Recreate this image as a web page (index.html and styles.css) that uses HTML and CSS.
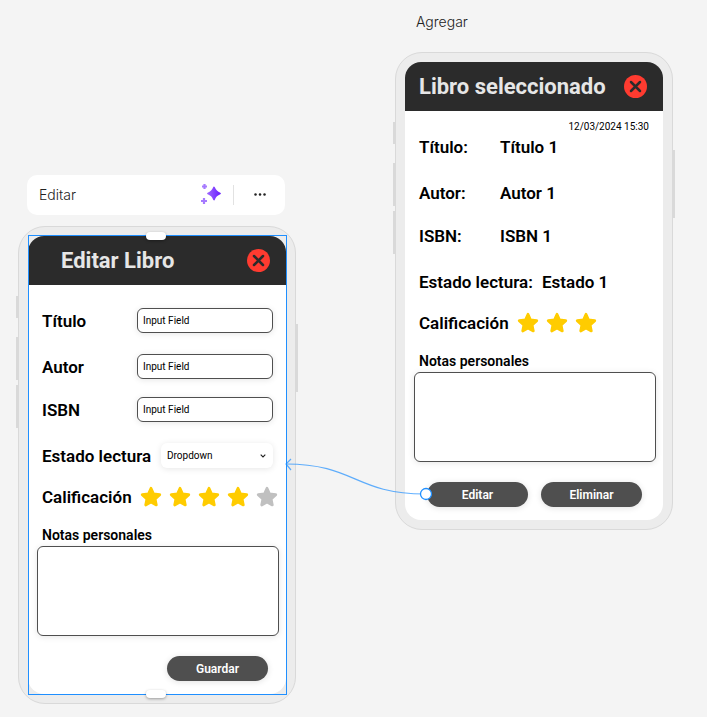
FILE: index.html
```html
<!DOCTYPE html>
<html lang="es">
<head>
<meta charset="utf-8">
<meta name="viewport" content="width=device-width, initial-scale=1">
<title>Libros</title>
<link rel="stylesheet" href="styles.css">
</head>
<body>
<svg class="defs" aria-hidden="true">
  <symbol id="star" viewBox="0 0 24 24"><path d="M12 2.500l2.700 6.100 6.900.8-5.100 4.700 1.300 6.600L12 17.600l-5.800 3.100 1.300-6.600L2.400 9.400l6.900-.8z" stroke="currentColor" stroke-width="3" stroke-linejoin="round" fill="currentColor"/></symbol>
  <symbol id="close" viewBox="0 0 24 24"><circle cx="12" cy="12" r="12" fill="#ff3b30"/><path d="M7.300 7.300l9.400 9.400M16.700 7.300l-9.400 9.400" stroke="#2b2b2b" stroke-width="2.600" stroke-linecap="round"/></symbol>
</svg>
<main class="canvas">
  <div class="toolbar">
    <span class="frame-name">Editar</span>
    <button class="tool ai" type="button" aria-label="IA">
      <svg width="22" height="22" viewBox="0 0 22 22">
        <defs><linearGradient id="violet" x1="0" x2="1"><stop offset="0" stop-color="#9b62ff"/><stop offset="1" stop-color="#6c22ff"/></linearGradient></defs>
        <path d="M14 3.500q1.600 4.400 6 6-4.400 1.600-6 6-1.600-4.400-6-6 4.400-1.600 6-6z" fill="url(#violet)" stroke="url(#violet)" stroke-width="1.800" stroke-linejoin="round"/>
        <path d="M4.500 0v5M2 2.500h5M4 14v6M1 17h6" stroke="#a67aff" stroke-width="2.200"/>
      </svg>
    </button>
    <button class="tool more" type="button" aria-label="Más">
      <svg width="14" height="4" viewBox="0 0 14 4" fill="#222"><circle cx="2.500" cy="1.500" r="1.250"/><circle cx="7" cy="1.500" r="1.250"/><circle cx="11.500" cy="1.500" r="1.250"/></svg>
    </button>
  </div>

  <section class="phone phone-edit">
    <i class="key key-a"></i><i class="key key-b"></i><i class="key key-c"></i><i class="key key-power"></i>
    <form class="screen">
      <header class="bar bar-indented">
        <h1>Editar Libro</h1>
        <button class="close" type="button" aria-label="Cerrar"><svg><use href="#close"/></svg></button>
      </header>
      <div class="content">
        <div class="row"><label for="titulo">Título</label><input id="titulo" type="text" value="Input Field"></div>
        <div class="row"><label for="autor">Autor</label><input id="autor" type="text" value="Input Field"></div>
        <div class="row"><label for="isbn">ISBN</label><input id="isbn" type="text" value="Input Field"></div>
        <div class="row"><label for="estado">Estado lectura</label>
          <span class="picker"><select id="estado"><option>Dropdown</option></select><svg width="6" height="4" viewBox="0 0 6 4"><path d="M.7.7L3 3 5.300.7" fill="none" stroke="#222" stroke-width="1.100"/></svg></span>
        </div>
        <div class="row row-rating"><span>Calificación</span>
          <span class="stars" role="img" aria-label="4 de 5"><svg><use href="#star"/></svg><svg><use href="#star"/></svg><svg><use href="#star"/></svg><svg><use href="#star"/></svg><svg class="off"><use href="#star"/></svg></span>
        </div>
        <label class="notes-label" for="notas">Notas personales</label>
        <textarea id="notas"></textarea>
        <div class="actions"><button class="pill" type="button">Guardar</button></div>
      </div>
    </form>
    <div class="selection"><i class="handle handle-top"></i><i class="handle handle-bottom"></i></div>
  </section>

  <span class="frame-name frame-name-detail">Agregar</span>
  <section class="phone phone-detail">
    <i class="key key-a"></i><i class="key key-b"></i><i class="key key-c"></i><i class="key key-power"></i>
    <div class="screen">
      <header class="bar">
        <h1>Libro seleccionado</h1>
        <button class="close" type="button" aria-label="Cerrar"><svg><use href="#close"/></svg></button>
      </header>
      <div class="content content-dated">
        <time class="date">12/03/2024 15:30</time>
        <div class="row"><span class="term">Título:</span><span>Título 1</span></div>
        <div class="row"><span class="term">Autor:</span><span>Autor 1</span></div>
        <div class="row"><span class="term">ISBN:</span><span>ISBN 1</span></div>
        <div class="row"><span class="term term-wide">Estado lectura:</span><span>Estado 1</span></div>
        <div class="row row-rating"><span>Calificación</span>
          <span class="stars" role="img" aria-label="3 estrellas"><svg><use href="#star"/></svg><svg><use href="#star"/></svg><svg><use href="#star"/></svg></span>
        </div>
        <label class="notes-label" for="notas-detalle">Notas personales</label>
        <textarea id="notas-detalle"></textarea>
        <div class="actions actions-pair"><button class="pill" type="button">Editar</button><button class="pill" type="button">Eliminar</button></div>
      </div>
    </div>
  </section>

  <svg class="link" width="150" height="46" viewBox="0 0 150 46" fill="none" stroke="#1f8fff">
    <g opacity=".7"><path d="M141 38C71 38 71 8 2 8" stroke-width="1.200"/><path d="M7 3L2 8l5 6" stroke-width="1.200"/></g>
    <circle cx="142" cy="38" r="5.500" fill="#fff" stroke-width="1.300"/>
  </svg>
</main>
</body>
</html>
```
FILE: styles.css
```css
* { box-sizing: border-box; }

body {
  margin: 0;
  background: #f4f4f4;
  color: #000;
  font-family: Roboto, "Liberation Sans", sans-serif;
}

button, input, select, textarea { font-family: inherit; margin: 0; }
svg { display: block; }
.defs { position: absolute; width: 0; height: 0; }

/* Free canvas: frames are placed by coordinates */
.canvas { position: relative; min-height: 100vh; overflow: hidden; }
.toolbar { position: absolute; left: 27px; top: 175px; }
.phone-edit { position: absolute; left: 18px; top: 226px; }
.phone-detail { position: absolute; left: 395px; top: 52px; }
.frame-name-detail { position: absolute; left: 416px; top: 12px; }
.link { position: absolute; left: 284px; top: 456px; }

.frame-name {
  font-family: Inter, sans-serif;
  font-weight: 300;
  font-size: 14px;
  line-height: 20px;
  color: #222;
}

.toolbar {
  display: flex;
  align-items: center;
  width: 258px;
  height: 40px;
  padding-left: 12px;
  border-radius: 10px;
  background: #fff;
}
.tool {
  display: flex;
  align-items: center;
  justify-content: center;
  height: 20px;
  padding: 0;
  border: 0;
  background: none;
}
.ai { width: 44px; margin-left: auto; }
.more { width: 52px; border-left: 1px solid #e2e2e2; }

/* Device frame */
.phone {
  width: 278px;
  padding: 9px;
  border: 1px solid #d9d9d9;
  border-radius: 27px;
  background: #ececec;
}
.key { position: absolute; left: -3px; width: 2px; background: #d9d9d9; }
.key-a { top: 69px; height: 22px; }
.key-b { top: 110px; height: 43px; }
.key-c { top: 158px; height: 43px; }
.key-power { left: auto; right: -3px; top: 97px; height: 68px; }

.screen {
  overflow: hidden;
  border-radius: 16px;
  background: #fff;
}
.bar {
  display: flex;
  align-items: center;
  justify-content: space-between;
  height: 49px;
  padding: 0 16px 0 14px;
  background: #2b2b2b;
}
.bar-indented { padding-left: 33px; }
.bar h1 { margin: 0; font-size: 22px; line-height: 28px; font-weight: 700; color: #e6e6e6; }
.close { padding: 0; border: 0; background: none; }
.close svg { width: 23px; height: 23px; }

.content { display: flex; flex-direction: column; padding: 23px 7px 13px 9px; }
.content-dated { padding-top: 9px; }
.date { align-self: flex-end; padding-right: 7px; font-size: 10px; line-height: 14px; }

.row {
  display: flex;
  align-items: center;
  justify-content: space-between;
  height: 25px;
  margin-bottom: 21px;
  padding: 0 6px 0 5px;
  font-size: 17px;
  line-height: 24px;
  font-weight: 600;
}
.row:nth-of-type(2) { margin-bottom: 18px; }
.row:has(.term), .row-rating { justify-content: flex-start; }
.row:has(.picker), .row:has(.term-wide) { margin-bottom: 16px; }
.term { width: 81px; }
.term-wide { width: 123px; }

.row input, .picker select {
  height: 25px;
  border-radius: 6px;
  background: #fff;
  color: #000;
  font-size: 10px;
  box-shadow: 0 1px 6px rgba(0, 0, 0, .1);
}
.row input { width: 136px; padding: 0 5px; border: 1px solid #4f4f4f; }
.picker { position: relative; width: 112px; }
.picker select { display: block; width: 100%; padding: 0 6px; border: 0; appearance: none; }
.picker svg { position: absolute; right: 7px; top: 11px; }

.row-rating { margin-bottom: 16px; }
.stars { display: flex; gap: 7px; margin-left: 8px; color: #fc0; }
.stars svg { width: 22px; height: 22px; }
.stars .off { color: #c0c0c0; }

.notes-label { padding-left: 5px; font-size: 14px; line-height: 21px; font-weight: 600; }
textarea {
  width: 100%;
  height: 90px;
  padding: 5px;
  border: 1px solid #4f4f4f;
  border-radius: 6px;
  background: #fff;
  font-size: 10px;
  resize: none;
  box-shadow: 0 1px 6px rgba(0, 0, 0, .1);
}
.actions { display: flex; justify-content: flex-end; gap: 13px; padding: 20px 11px 0 0; }
.actions-pair { padding-right: 14px; }
.pill {
  width: 101px;
  height: 25px;
  padding: 0;
  border: 0;
  border-radius: 13px;
  background: #4f4f4f;
  color: #fff;
  font-size: 12px;
  font-weight: 600;
  box-shadow: 0 1px 6px rgba(0, 0, 0, .12);
}

/* Selected frame outline and its resize handles */
.selection { position: absolute; inset: 8px 8px 8px 9px; border: 1px solid #1f8fff; pointer-events: none; }
.handle {
  position: absolute;
  left: 50%;
  width: 20px;
  height: 8px;
  margin-left: -12px;
  border-radius: 4px;
  background: #fff;
  box-shadow: 0 1px 3px rgba(0, 0, 0, .35);
}
.handle-top { top: -4px; }
.handle-bottom { bottom: -4px; }
```
